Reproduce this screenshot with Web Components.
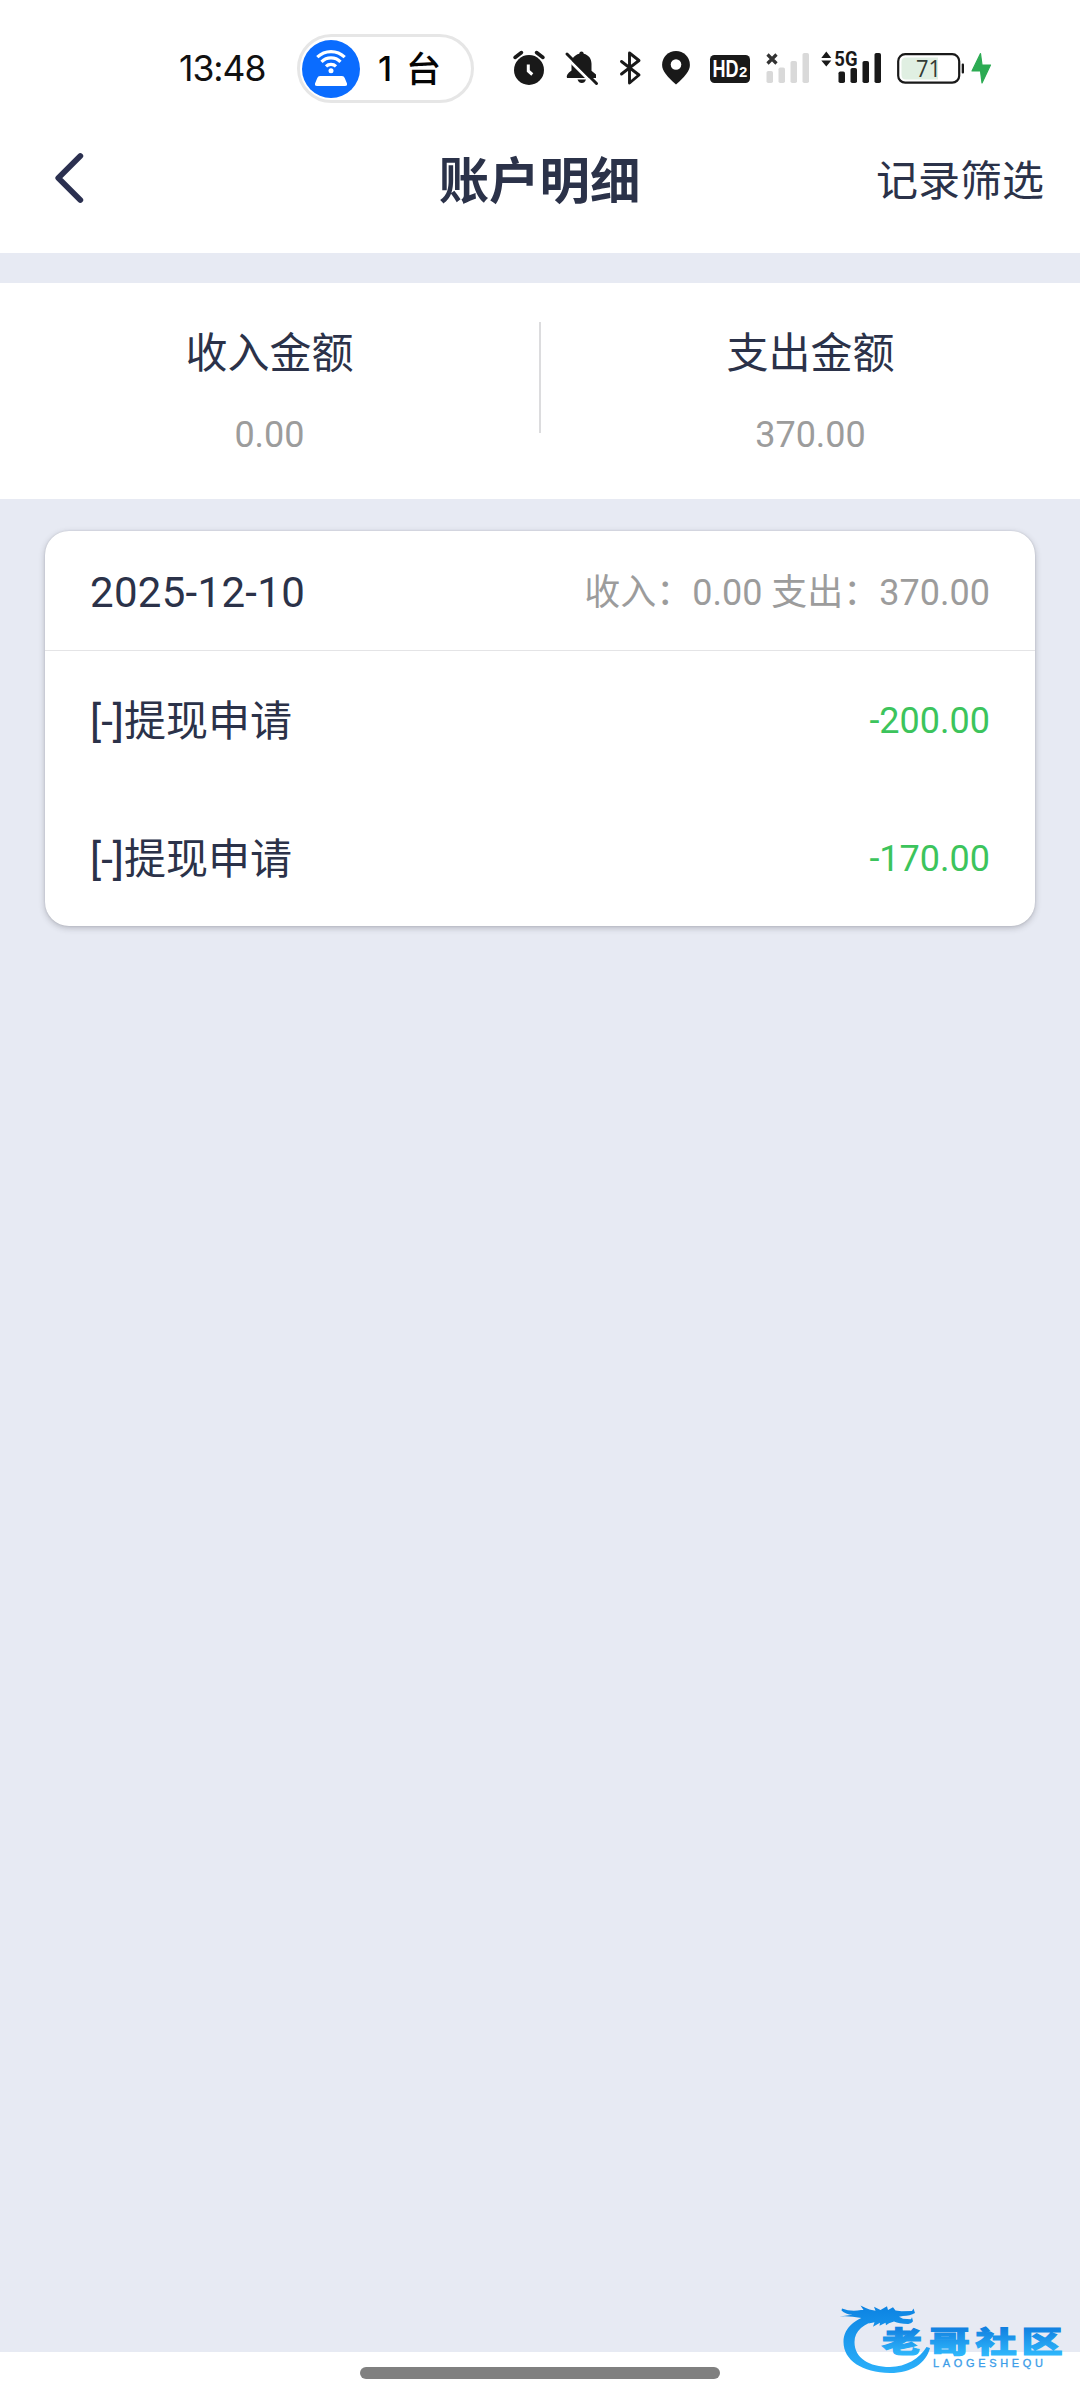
<!DOCTYPE html>
<html lang="zh-CN">
<head>
<meta charset="utf-8">
<title>账户明细</title>
<style>
html,body{margin:0;padding:0}
body{width:1080px;height:2400px;overflow:hidden;font-family:Roboto,"Noto Sans CJK SC",sans-serif;color:#2b3249}
</style>
</head>
<body>
<account-page></account-page>
<script>
const define = (name, html) => {
  const t = document.createElement('template');
  t.innerHTML = html;
  customElements.define(name, class extends HTMLElement {
    constructor() {
      super();
      this.attachShadow({mode: 'open'}).append(t.content.cloneNode(true));
    }
  });
};

define('device-pill', `
<style>
:host{display:flex;align-items:center;box-sizing:border-box;width:177px;height:69px;border:3px solid #e6e6e6;border-radius:35px;padding-left:2px;background:#fff;color:#050505;font:500 34px/60px Inter,"Noto Sans CJK SC",sans-serif}
svg{display:block;flex:none}
.n{margin-left:18px;width:16px}
.u{margin-left:12px;font-size:35px;padding-top:1px}
</style>
<svg width="58" height="58" viewBox="302 39 58 58">
<circle cx="331" cy="68" r="29" fill="#0a6cff"/>
<g fill="none" stroke="#fff" stroke-width="3.2">
<path d="M317.300 56.200a19.500 19.500 0 0 1 27.400 0"/><path d="M321.500 60.900a13.400 13.400 0 0 1 19 0"/><path d="M326 65.300a7.200 7.200 0 0 1 10 0"/></g>
<circle cx="331" cy="69.700" r="2.500" fill="#fff"/>
<path d="M320 75h22q2 0 2.700 2l2.300 5.500q.5 2.500-2 2.500h-28q-2.500 0-2-2.500l2.300-5.500q.7-2 2.700-2z" fill="#fff"/>
</svg><span class="n">1</span><span class="u">台</span>`);

define('status-icons', `
<style>
:host{display:flex;gap:10px;height:40px}
svg{display:block;overflow:visible;height:40px}
</style>
<svg width="40" viewBox="510 48 40 40"><circle cx="529" cy="70" r="15" fill="#191919"/><path d="M515 57.500l6.500-5M543 57.500l-6.500-5" stroke="#191919" stroke-width="3.500" stroke-linecap="round"/><path d="M528.300 64.500v6.500l4 3.500" fill="none" stroke="#fff" stroke-width="3"/></svg>
<svg width="44" viewBox="560 48 44 40"><g fill="#191919"><path d="M581.500 51.500q2 0 2.300 2.200c5 1.300 7.700 5 7.700 10v7l4.500 3.800v3.500h-29q-1.500-3.500 4.500-7.500v-6.800c0-5 2.700-8.700 7.700-10q.3-2.200 2.300-2.200z"/><path d="M577.500 79.500h8.500q-1.200 3.500-4.200 3.500t-4.300-3.500z"/></g><path d="M564.500 55.500l30 30" stroke="#fff" stroke-width="3"/><path d="M567 54l29.500 29.500" stroke="#191919" stroke-width="3" stroke-linecap="round"/></svg>
<svg width="32" viewBox="614 48 32 40"><path d="M621.500 61.500l17.500 13.500-9.500 8v-30l9.500 7.500-17.500 13.500" fill="none" stroke="#191919" stroke-width="2.900" stroke-linejoin="round" stroke-linecap="round"/></svg>
<svg width="40" viewBox="656 48 40 40"><path d="M676 51a13.900 13.900 0 0 1 13.900 13.900c0 6.100-5.100 11.600-13.900 19.600-8.800-8-13.900-13.500-13.900-19.600A13.900 13.900 0 0 1 676 51z" fill="#191919"/><circle cx="676" cy="64.500" r="5.300" fill="#fff"/></svg>
<svg width="48" viewBox="706 48 48 40"><rect x="710" y="55" width="40" height="28" rx="4.500" fill="#191919"/><g fill="#fff" font-family="Liberation Sans,sans-serif" font-weight="700"><text transform="translate(712.500 77) scale(.75 1)" font-size="24">HD</text><text x="739" y="77" font-size="15">2</text></g></svg>
<svg width="46" viewBox="764 48 46 40"><g fill="#d9d9d9"><rect x="766.500" y="71" width="6.500" height="12" rx="1.800"/><rect x="778.500" y="67.500" width="6.500" height="15.500" rx="1.800"/><rect x="790.500" y="61" width="6.500" height="22" rx="1.800"/><rect x="802.500" y="53" width="6.500" height="30" rx="1.800"/></g><path d="M767.500 54.500l9 9M776.500 54.500l-9 9" stroke="#333" stroke-width="3.200"/></svg>
<svg width="64" viewBox="820 48 64 40"><g fill="#191919"><path d="M821.300 58l5-6.500 5 6.500zM821.300 60.500l5 6 5-6z"/><rect x="838.500" y="71.500" width="6.500" height="11.500" rx="1.800"/><rect x="850.500" y="68" width="6.500" height="15" rx="1.800"/><rect x="862.500" y="61" width="6.500" height="22" rx="1.800"/><rect x="874.500" y="53" width="6.500" height="30" rx="1.800"/><text transform="translate(834.300 66) scale(.88 1)" font-family="Roboto,sans-serif" font-weight="700" font-size="21">5G</text></g></svg>
<svg width="67" viewBox="894 48 67 40"><rect x="898.200" y="54.200" width="61" height="28.500" rx="7" fill="#fff" stroke="#191919" stroke-width="2.200"/><path d="M906 57.500h32v22h-32q-4.500 0-4.500-4.500v-13q0-4.500 4.500-4.500z" fill="#e0efe2"/><rect x="961.700" y="63.500" width="2.300" height="10" rx="1" fill="#191919"/><text x="916" y="77" font-family="Open Sans,sans-serif" font-size="23.500" fill="#333b35" textLength="25" lengthAdjust="spacingAndGlyphs">71</text></svg>
<svg width="20" viewBox="971 48 20 40"><path d="M980.500 53.500l-8.500 17.500h8.500l1.500 12 8.500-18h-8.500z" fill="#2cab53" stroke="#2cab53" stroke-width="1.200" stroke-linejoin="round"/></svg>`);

define('status-bar', `
<style>
:host{display:flex;align-items:flex-start;box-sizing:border-box;height:137px;padding:34px 0 0 179px}
.time{width:118px;margin-top:13px;font:400 35.500px/44px Inter,sans-serif;letter-spacing:-1px;color:#111}
status-icons{margin:14px 0 0 36px}
</style><span class="time">13:48</span><device-pill></device-pill><status-icons></status-icons>`);

define('nav-bar', `
<style>
:host{display:grid;grid-template-columns:1fr auto 1fr;align-items:center;height:90px;padding:0 36px 26px 54px}
svg{display:block;margin-top:-8px}
.title{font-size:50.400px;line-height:60px;font-weight:700;margin-left:-19px}
.act{justify-self:end;font-size:42px;line-height:60px}
</style>
<svg width="30" height="52" viewBox="54 152 30 52"><path d="M80.300 156l-22 22 22 22" fill="none" stroke="#2b3050" stroke-width="5.800" stroke-linecap="round" stroke-linejoin="round"/></svg>
<span class="title"><slot></slot></span><span class="act"><slot name="action"></slot></span>`);

define('amount-total', `
<style>
:host{display:flex;flex-direction:column;align-items:center;width:539px;padding-top:41px}
.l{font-size:42px;line-height:60px}
.v{font-size:36px;line-height:44px;margin-top:29px;color:#9c9c9c}
</style><span class="l"><slot name="label"></slot></span><span class="v"><slot></slot></span>`);

define('amount-summary', `
<style>
:host{display:flex;background:#fff;height:216px;margin-top:30px}
i{width:2px;height:111px;margin:39px 0 0;background:#dcdcde}
</style><slot name="in"></slot><i></i><slot name="out"></slot>`);

define('record-row', `
<style>
:host{display:flex;justify-content:space-between;align-items:center;box-sizing:border-box;height:138px;padding:4px 45px 0;font-size:42px;line-height:60px}
.amt{font-size:36px;color:#3cc45c;padding-bottom:2px}
</style><span><slot></slot></span><span class="amt"><slot name="amount"></slot></span>`);

define('day-card', `
<style>
:host{display:block;box-sizing:border-box;height:395px;margin:32px 45px 0;background:#fff;border-radius:24px;box-shadow:0 2px 6px rgba(50,50,60,.28),0 0 2px rgba(50,50,60,.15)}
header{display:flex;justify-content:space-between;align-items:center;height:120px;padding:5px 45px 0;box-sizing:border-box;border-bottom:1px solid #e4e4e6;font-size:42px;line-height:60px}
.date{letter-spacing:.3px}
.sum{font-size:36px;color:#9c9c9c;white-space:pre}
</style><header><span class="date"><slot name="date"></slot></span><span class="sum"><slot name="sum"></slot></span></header><slot></slot>`);

define('home-indicator', `
<style>
:host{display:flex;justify-content:center;box-sizing:border-box;height:48px;padding-top:15px;background:#fff}
i{width:360px;height:12px;border-radius:6px;background:#808080}
</style><i></i>`);

define('site-watermark', `
<style>
:host{position:absolute;left:836px;top:2296px;width:236px;height:88px}
svg{display:block}
</style>
<svg width="236" height="88" viewBox="836 2296 236 88">
<defs><linearGradient id="g" gradientUnits="userSpaceOnUse" x1="0" y1="2306" x2="0" y2="2372"><stop offset="0" stop-color="#0c83e2"/><stop offset="1" stop-color="#2bb0fa"/></linearGradient>
<linearGradient id="h" x1="0" y1="0" x2="0" y2="1"><stop offset="0.200" stop-color="#117fe0"/><stop offset=".85" stop-color="#2eb6fb"/></linearGradient></defs>
<g fill="url(#g)"><path d="M880 2313C857 2316 843.500 2327 843.500 2342C843.500 2360 862 2372.700 890 2373C912 2373 926 2363 930 2348L926.500 2347C920 2358 906 2367 890 2367C869 2367 854.500 2358 854.500 2342C854.500 2331 864 2323 878 2320.500Z"/>
<path d="M842 2308.500q9 3.500 19 1.500l2.500 0-3-4.500q5 2.500 9 4l6 1.200-1.500-4 6.500 3.300 6.500-3.700 1 3.700 5-2.700 2.500 3.200 6 .8 10.500-.3 1.500-2.500 1.500 4.500q-5 3-12 3l-4 .7 4 2 8 .5 1-2 1 4q-2 3-5 2.800-9-.5-14-2.500l-5 1.800-3 2-.5-2.500-6 3 .5-3-7 4 1.500-4.500-6 1.200 3-4-6 .8-4-2.300q-13-2.500-22-1.500l13-1.700q-7-.2-11-4.300z"/></g>
<g font-family="Noto Sans CJK SC,sans-serif" font-weight="900" font-size="29" fill="url(#h)" stroke="url(#h)" stroke-width="1.100"><text transform="translate(882 2352.500) scale(1.370 1)">老</text><text transform="translate(929 2352.500) scale(1.410 1)">哥</text><text transform="translate(975.500 2352.500) scale(1.420 1)">社</text><text transform="translate(1021.500 2352.500) scale(1.420 1)">区</text></g>
<text x="933" y="2367" font-family="Liberation Sans,sans-serif" font-size="11" fill="#3b9de8" stroke="#3b9de8" stroke-width=".3" textLength="110" lengthAdjust="spacing">LAOGESHEQU</text>
</svg>`);

define('account-page', `
<style>
:host{display:flex;flex-direction:column;width:1080px;height:2400px;background:#e7eaf3;position:relative}
.top{background:#fff;height:253px}
home-indicator{margin-top:auto}
</style>
<div class="top"><status-bar></status-bar><nav-bar>账户明细<span slot="action">记录筛选</span></nav-bar></div>
<amount-summary><amount-total slot="in"><span slot="label">收入金额</span>0.00</amount-total><amount-total slot="out"><span slot="label">支出金额</span>370.00</amount-total></amount-summary>
<day-card><span slot="date">2025-12-10</span><span slot="sum">收入：0.00 支出：370.00</span>
<record-row>[-]提现申请<span slot="amount">-200.00</span></record-row>
<record-row>[-]提现申请<span slot="amount">-170.00</span></record-row></day-card>
<home-indicator></home-indicator>
<site-watermark></site-watermark>`);
</script>
</body>
</html>
